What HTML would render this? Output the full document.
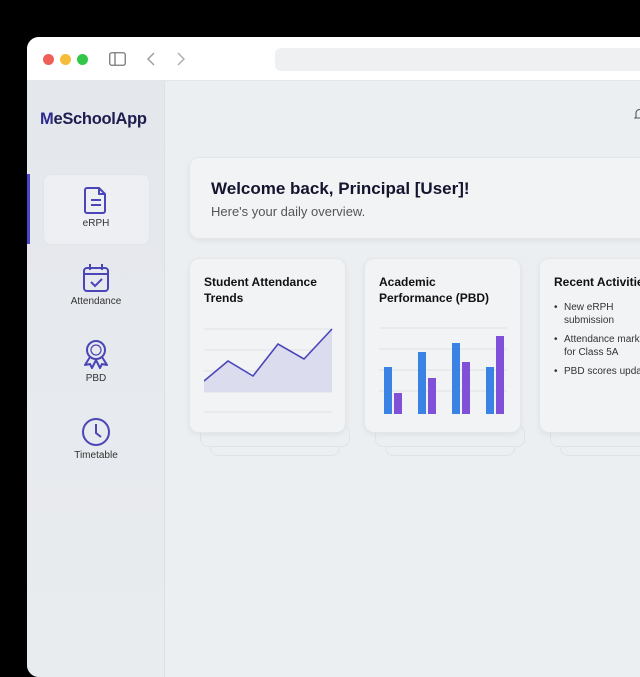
<!DOCTYPE html>
<html><head><style>
*{margin:0;padding:0;box-sizing:border-box}
body{width:640px;height:640px;background:#000;overflow:hidden;font-family:"Liberation Sans",sans-serif;position:relative}
.win{position:absolute;left:27px;top:37px;width:640px;height:640px;border-radius:12px;overflow:hidden;background:#eceff2}
.tb{position:absolute;left:0;top:0;right:0;height:44px;background:#fff;border-bottom:1px solid #e3e6ea}
.dot{position:absolute;top:17px;width:11px;height:11px;border-radius:50%}
.side{position:absolute;left:0;top:44px;width:138px;bottom:0;background:linear-gradient(180deg,#e4e7ec,#e9ecef);border-right:1px solid #dde1e6}
.logo{position:absolute;left:13px;top:73px;font-weight:bold;font-size:16.5px;color:#1e1d4f;letter-spacing:-0.3px}
.nav{position:absolute;left:0;width:138px;text-align:center;font-size:10px;color:#333}
.nav svg{display:block;margin:0 auto 3px}
.card{position:absolute;background:#f1f3f5;border-radius:10px;box-shadow:0 2px 6px rgba(0,0,0,.06);border:1px solid #e4e7ea}
.stk{position:absolute;background:#eceff1;border-radius:8px;border:1px solid #e0e3e6}
.ct{font-weight:bold;font-size:12px;color:#111;line-height:16px;position:absolute;left:14px;top:15px}
.li{position:relative;padding-left:10px;margin-bottom:6px}
.li span{position:absolute;left:0}
</style></head><body>
<div class="win">
 <div class="tb">
  <div class="dot" style="left:16px;background:#ee5f57"></div>
  <div class="dot" style="left:33px;background:#f5bd3a"></div>
  <div class="dot" style="left:50px;background:#33c748"></div>
  <svg style="position:absolute;left:82px;top:15px" width="17" height="14"><rect x="0.75" y="0.75" width="15.5" height="12.5" rx="2" fill="none" stroke="#777" stroke-width="1.3"/><line x1="6" y1="1" x2="6" y2="13" stroke="#777" stroke-width="1.3"/></svg>
  <svg style="position:absolute;left:119px;top:15px" width="40" height="14"><path d="M8 1 L2 7 L8 13" fill="none" stroke="#999" stroke-width="1.4"/><path d="M32 1 L38 7 L32 13" fill="none" stroke="#aaa" stroke-width="1.4"/></svg>
  <div style="position:absolute;left:248px;top:11px;width:400px;height:23px;border-radius:6px;background:#eef0f2"></div>
 </div>
 <div class="side">
  <div style="position:absolute;left:0;top:93px;width:3px;height:70px;background:#4a47c6"></div>
  <div style="position:absolute;left:16px;top:93px;width:107px;height:71px;border-radius:8px;background:#edeff2;border:1px solid #e2e5e9"></div>
 </div>
 <div class="logo"><span style="color:#2d2a8e">M</span>eSchoolApp</div>
 <div class="nav" style="top:148px"><svg width="26" height="30" viewBox="0 0 26 30" fill="none" stroke="#4a46b8" stroke-width="2" stroke-linejoin="round"><path d="M4 3h12l6 6v17a2 2 0 0 1-2 2H4a2 2 0 0 1-2-2V5a2 2 0 0 1 2-2z"/><path d="M16 3v6h6"/><path d="M8 15h10M8 20h10"/></svg>eRPH</div>
 <div class="nav" style="top:226px"><svg width="28" height="30" viewBox="0 0 28 30" fill="none" stroke="#4a46b8" stroke-width="2"><rect x="2" y="5" width="24" height="23" rx="3"/><path d="M2 11h24M8 1v6M20 1v6"/><path d="M9 19l4 4 7-7"/></svg>Attendance</div>
 <div class="nav" style="top:302px"><svg width="28" height="31" viewBox="0 0 28 31" fill="none" stroke="#4a46b8" stroke-width="2" stroke-linejoin="round"><circle cx="14" cy="11" r="9"/><circle cx="14" cy="11" r="5" stroke-width="1.2"/><path d="M8 18L3 26l5-1 2 4 4-8 4 8 2-4 5 1-5-8"/></svg>PBD</div>
 <div class="nav" style="top:380px"><svg width="30" height="30" viewBox="0 0 30 30" fill="none" stroke="#4a46b8" stroke-width="2"><circle cx="15" cy="15" r="13"/><path d="M15 7v9l5 4"/></svg>Timetable</div>

 <svg style="position:absolute;left:607px;top:70px" width="10" height="14" viewBox="0 0 10 14" fill="none" stroke="#555" stroke-width="1.1"><path d="M2 10V6a3.5 3.5 0 0 1 7 0v4l1 1H1z"/></svg>

 <div class="card" style="left:162px;top:120px;width:500px;height:82px">
  <div style="position:absolute;left:21px;top:21px;font-weight:bold;font-size:17px;color:#14142e">Welcome back, Principal [User]!</div>
  <div style="position:absolute;left:21px;top:46px;font-size:13px;color:#555">Here's your daily overview.</div>
 </div>

 <div class="stk" style="left:183px;top:395px;width:130px;height:24px"></div>
 <div class="stk" style="left:173px;top:388px;width:150px;height:22px"></div>
 <div class="card" style="left:162px;top:221px;width:157px;height:175px">
  <div class="ct">Student Attendance<br>Trends</div>
  <svg style="position:absolute;left:14px;top:65px" width="130" height="90"><g stroke="#dfe2e7"><line x1="0" y1="5" x2="128" y2="5"/><line x1="0" y1="26" x2="128" y2="26"/><line x1="0" y1="47" x2="128" y2="47"/><line x1="0" y1="68" x2="128" y2="68"/><line x1="0" y1="88" x2="128" y2="88"/></g><path d="M0 57L24 37 49 52 74 20 100 35 128 5V68H0z" fill="#dcdcef"/><path d="M0 57L24 37 49 52 74 20 100 35 128 5" fill="none" stroke="#4a46b8" stroke-width="1.6"/></svg>
 </div>

 <div class="stk" style="left:358px;top:395px;width:130px;height:24px"></div>
 <div class="stk" style="left:348px;top:388px;width:150px;height:22px"></div>
 <div class="card" style="left:337px;top:221px;width:157px;height:175px">
  <div class="ct">Academic<br>Performance (PBD)</div>
  <svg style="position:absolute;left:14px;top:65px" width="130" height="90"><g stroke="#dfe2e7"><line x1="0" y1="4" x2="128" y2="4"/><line x1="0" y1="25" x2="128" y2="25"/><line x1="0" y1="46" x2="128" y2="46"/><line x1="0" y1="67" x2="128" y2="67"/></g>
  <rect x="5" y="43" width="8" height="54" fill="#3a82e4"/><rect x="15" y="69" width="8" height="28" fill="#8050d8"/>
  <rect x="39" y="28" width="8" height="69" fill="#3a82e4"/><rect x="49" y="54" width="8" height="43" fill="#8050d8"/>
  <rect x="73" y="19" width="8" height="78" fill="#3a82e4"/><rect x="83" y="38" width="8" height="59" fill="#8050d8"/>
  <rect x="107" y="43" width="8" height="54" fill="#3a82e4"/><rect x="117" y="12" width="8" height="85" fill="#8050d8"/></svg>
 </div>

 <div class="stk" style="left:533px;top:395px;width:130px;height:24px"></div>
 <div class="stk" style="left:523px;top:388px;width:150px;height:22px"></div>
 <div class="card" style="left:512px;top:221px;width:157px;height:175px">
  <div class="ct">Recent Activities</div>
  <div style="position:absolute;left:14px;top:42px;font-size:10px;color:#333;line-height:13px;width:140px">
   <div class="li"><span>•</span>New eRPH<br>submission</div>
   <div class="li"><span>•</span>Attendance marked<br>for Class 5A</div>
   <div class="li"><span>•</span>PBD scores updated</div>
  </div>
 </div>
</div>
</body></html>
